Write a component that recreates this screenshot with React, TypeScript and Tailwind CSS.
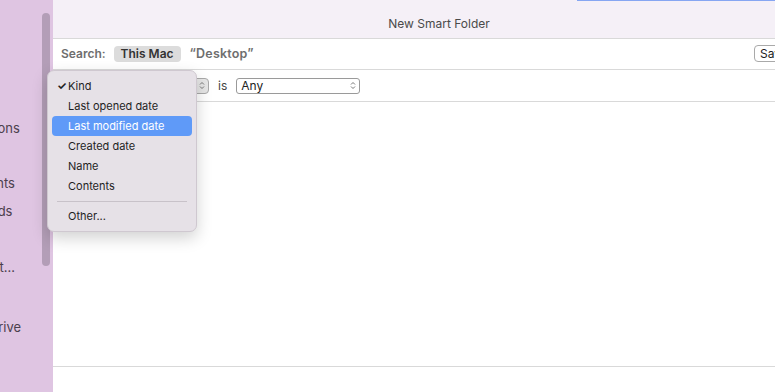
import React from "react";

const font = { fontFamily: "Inter, 'Noto Sans', 'Liberation Sans', sans-serif" };

function Stepper({ className = "" }: { className?: string }) {
  return (
    <svg width="6" height="9" viewBox="0 0 6 9" className={className}>
      <path d="M1 3.5 L3 1.5 L5 3.5" fill="none" stroke="#777" strokeWidth="1" />
      <path d="M1 5.5 L3 7.5 L5 5.5" fill="none" stroke="#777" strokeWidth="1" />
    </svg>
  );
}

export default function App() {
  const items = ["Last opened date", "Last modified date", "Created date", "Name", "Contents"];
  return (
    <div className="w-[775px] h-[392px] flex relative overflow-hidden bg-white" style={font}>
      {/* Sidebar */}
      <div className="w-[53px] h-full bg-[#dfc5e2] relative overflow-hidden shrink-0">
        <div className="flex flex-col text-[13px] text-[#4b404d] whitespace-nowrap">
          <div className="mt-[119px] h-[18px] leading-[18px] -ml-[56px]">Applications</div>
          <div className="mt-[37px] h-[18px] leading-[18px] -ml-[55px]">Documents</div>
          <div className="mt-[10px] h-[18px] leading-[18px] -ml-[56px]">Downloads</div>
          <div className="mt-[38px] h-[18px] leading-[18px] -ml-[39px]">Recent…</div>
          <div className="mt-[42px] h-[18px] leading-[18px] -ml-[54px]">iCloud Drive</div>
        </div>
        <div className="absolute left-[42px] top-[13px] w-[8px] h-[253px] rounded-full bg-[#b39eb7]" />
      </div>

      {/* Main */}
      <div className="flex-1 flex flex-col h-full relative">
        <div className="h-[39px] bg-[#f5f0f7] border-b border-[#d9d9d9] flex items-center justify-center shrink-0 relative">
          <div className="absolute left-[524px] top-0 right-0 h-px bg-[#86a6f2]" />
          <span className="text-[12px] text-[#4a4a4a] mt-[10px] ml-[50px]">New Smart Folder</span>
        </div>
        <div className="h-[31px] border-b border-[#d9d9d9] flex items-center shrink-0 text-[12px] font-semibold relative">
          <span className="ml-[8px] text-[#6e6e6e]">Search:</span>
          <span className="ml-[8px] h-[16px] px-[7px] rounded-[4px] bg-[#dcdcdc] text-[#333] flex items-center">This Mac</span>
          <span className="ml-[9px] text-[#6e6e6e] text-[12.5px] tracking-[0.2px]">“Desktop”</span>
          <div className="absolute left-[701px] top-[6px] h-[17px] w-[40px] border border-[#a9a9a9] rounded-[4px] bg-white font-normal text-[12px] text-[#222] pl-[5px] leading-[15px]">
            Save
          </div>
        </div>
        <div className="h-[32px] border-b border-[#d9d9d9] flex items-center shrink-0 text-[12px] text-[#333]">
          <div className="ml-[100px] h-[16px] w-[56px] border border-[#a9a9a9] rounded-[4px] bg-[#e6e6e6] flex items-center justify-end pr-[3px]">
            <Stepper />
          </div>
          <span className="ml-[9px] text-[#444]">is</span>
          <div className="ml-[9px] h-[16px] w-[124px] border border-[#9a9a9a] rounded-[3px] bg-white flex items-center justify-between pl-[4px] pr-[3px] text-[#222] text-[12px]">
            <span>Any</span>
            <Stepper />
          </div>
        </div>
        <div className="flex-1 border-b border-[#d9d9d9]" />
        <div className="h-[25px] shrink-0" />
      </div>

      {/* Popup menu */}
      <div className="absolute left-[47px] top-[70px] w-[150px] h-[162px] rounded-[7px] bg-[#e6e1e7] border border-[#cfc8d0] shadow-[0_6px_16px_rgba(0,0,0,0.18)] pt-[5px] px-[4px] text-[11px] text-[#1f1f1f]">
        <div className="h-[20px] flex items-center relative pl-[16px]">
          <span className="absolute left-[5px] top-[2px] text-[11px] font-bold">✓</span>
          Kind
        </div>
        {items.map((t) => (
          <div
            key={t}
            className={
              t === "Last modified date"
                ? "h-[20px] flex items-center pl-[16px] rounded-[4px] bg-[#5f9af8] text-white"
                : "h-[20px] flex items-center pl-[16px]"
            }
          >
            {t}
          </div>
        ))}
        <div className="h-[10px] flex items-center px-[5px]">
          <div className="h-px w-full bg-[#c8c2c9]" />
        </div>
        <div className="h-[20px] flex items-center pl-[16px]">Other...</div>
      </div>
    </div>
  );
}
